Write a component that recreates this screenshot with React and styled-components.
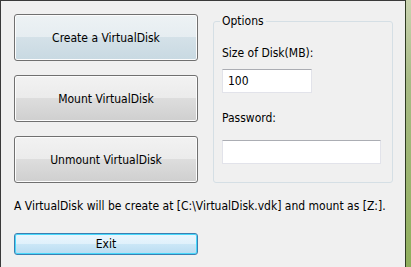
import React from "react";
import styled, { createGlobalStyle } from "styled-components";

const Global = createGlobalStyle`
  html, body { margin: 0; padding: 0; background: #f0f0f0; }
  body { font-family: "DejaVu Sans Condensed", "DejaVu Sans", sans-serif; font-size: 12px; color: #000; }
`;

const Frame = styled.div`
  width: 411px;
  height: 267px;
  display: flex;
  overflow: hidden;
`;

const Client = styled.div`
  width: 406px;
  border-top: 1px solid #3a3a3a;
  border-left: 1px solid #3a3a3a;
  border-right: 1px solid #2e3a22;
  background: #f0f0f0;
  padding: 13px 0 0 13px;
  box-sizing: border-box;
  display: flex;
  flex-direction: column;
`;

const GreenEdge = styled.div`
  flex: 1;
  background: linear-gradient(180deg, #c9d3b0 0%, #a8bb86 30%, #8fae5c 100%);
`;

const Top = styled.div`
  display: flex;
  align-items: flex-start;
`;

const ButtonColumn = styled.div`
  display: flex;
  flex-direction: column;
  gap: 14px;
  width: 184px;
`;

const Button = styled.button`
  font: inherit;
  color: #000;
  width: 100%;
  height: ${(p) => p.$h || 47}px;
  border-radius: 3px;
  border: 1px solid ${(p) => (p.$variant === "default" ? "#3c7fb1" : "#707070")};
  box-shadow: ${(p) =>
    p.$variant === "default" ? "inset 0 0 0 1px #48d8fb" : "inset 0 0 0 1px #fcfcfc"};
  background: ${(p) =>
    p.$variant === "hot"
      ? "linear-gradient(180deg, #edf2f4 0%, #e6edf1 49%, #d4e1e8 50%, #c8d9e2 100%)"
      : p.$variant === "default"
      ? "linear-gradient(180deg, #eaf6fd 0%, #e0f1fb 49%, #cbe7f7 50%, #b9dcf1 100%)"
      : "linear-gradient(180deg, #f2f2f2 0%, #ebebeb 49%, #dddddd 50%, #cfcfcf 100%)"};
  padding: 0;
  cursor: default;
`;

const Group = styled.fieldset`
  margin: 0 0 0 15px;
  width: 180px;
  height: 169px;
  box-sizing: border-box;
  border: 1px solid #d5dfe5;
  border-radius: 3px;
  padding: 0 0 0 8px;
  display: flex;
  flex-direction: column;
`;

const Legend = styled.legend`
  padding: 0 2px;
  margin-left: -2px;
  font-size: 12px;
`;

const Label = styled.div`
  margin-top: ${(p) => p.$mt}px;
  line-height: 14px;
`;

const Input = styled.input`
  font: inherit;
  width: ${(p) => p.$w}px;
  height: 24px;
  margin-top: ${(p) => p.$mt}px;
  box-sizing: border-box;
  border: 1px solid #e2e3ea;
  border-top-color: #abadb3;
  background: #fff;
  padding: 0 5px;
  outline: none;
`;

const Status = styled.div`
  margin-top: 16px;
  line-height: 14px;
  white-space: nowrap;
`;

const ExitRow = styled.div`
  margin-top: 20px;
  width: 184px;
`;

export default function App() {
  return (
    <>
      <Global />
      <Frame>
        <Client>
          <Top>
            <ButtonColumn>
              <Button $variant="hot">Create a VirtualDisk</Button>
              <Button>Mount VirtualDisk</Button>
              <Button>Unmount VirtualDisk</Button>
            </ButtonColumn>
            <Group>
              <Legend>Options</Legend>
              <Label $mt={18}>Size of Disk(MB):</Label>
              <Input $w={90} $mt={9} defaultValue="100" />
              <Label $mt={18}>Password:</Label>
              <Input $w={159} $mt={15} type="password" />
            </Group>
          </Top>
          <Status>A VirtualDisk will be create at [C:\VirtualDisk.vdk] and mount as [Z:].</Status>
          <ExitRow>
            <Button $variant="default" $h={22}>Exit</Button>
          </ExitRow>
        </Client>
        <GreenEdge />
      </Frame>
    </>
  );
}
